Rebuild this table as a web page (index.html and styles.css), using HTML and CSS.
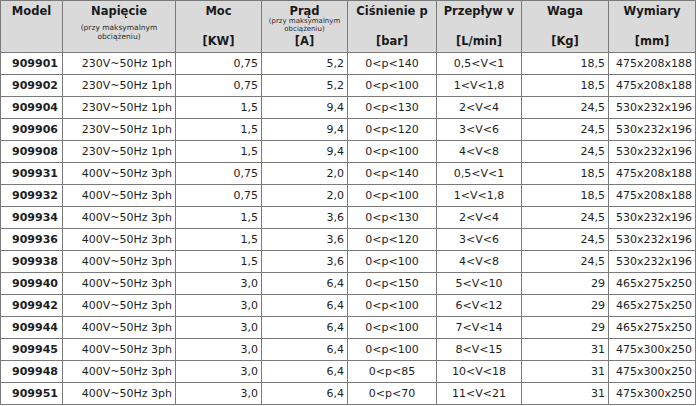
FILE: index.html
```html
<!DOCTYPE html>
<html lang="pl">
<head>
<meta charset="utf-8">
<title>Tabela</title>
<link rel="stylesheet" href="styles.css">
</head>
<body>
<table class="spec">
  <colgroup>
    <col class="c1"><col class="c2"><col class="c3"><col class="c4"><col class="c5"><col class="c6"><col class="c7"><col class="c8">
  </colgroup>
  <thead>
    <tr>
      <th><div class="hcell"><span class="title">Model</span></div></th>
      <th><div class="hcell"><span class="title">Napięcie</span><span class="note note-wide">(przy maksymalnym<br>obciążeniu)</span></div></th>
      <th><div class="hcell"><span class="title">Moc</span><span class="unit">[KW]</span></div></th>
      <th><div class="hcell"><span class="title">Prąd</span><span class="note">(przy maksymalnym<br>obciążeniu)</span><span class="unit unit-tight">[A]</span></div></th>
      <th><div class="hcell"><span class="title">Ciśnienie p</span><span class="unit">[bar]</span></div></th>
      <th><div class="hcell"><span class="title">Przepływ v</span><span class="unit">[L/min]</span></div></th>
      <th><div class="hcell"><span class="title">Waga</span><span class="unit">[Kg]</span></div></th>
      <th><div class="hcell"><span class="title">Wymiary</span><span class="unit">[mm]</span></div></th>
    </tr>
  </thead>
  <tbody>
    <tr><td class="model">909901</td><td class="r">230V~50Hz 1ph</td><td class="r">0,75</td><td class="r">5,2</td><td class="c">0&lt;p&lt;140</td><td class="c">0,5&lt;V&lt;1</td><td class="r">18,5</td><td class="dim">475x208x188</td></tr>
    <tr><td class="model">909902</td><td class="r">230V~50Hz 1ph</td><td class="r">0,75</td><td class="r">5,2</td><td class="c">0&lt;p&lt;100</td><td class="c">1&lt;V&lt;1,8</td><td class="r">18,5</td><td class="dim">475x208x188</td></tr>
    <tr><td class="model">909904</td><td class="r">230V~50Hz 1ph</td><td class="r">1,5</td><td class="r">9,4</td><td class="c">0&lt;p&lt;130</td><td class="c">2&lt;V&lt;4</td><td class="r">24,5</td><td class="dim">530x232x196</td></tr>
    <tr><td class="model">909906</td><td class="r">230V~50Hz 1ph</td><td class="r">1,5</td><td class="r">9,4</td><td class="c">0&lt;p&lt;120</td><td class="c">3&lt;V&lt;6</td><td class="r">24,5</td><td class="dim">530x232x196</td></tr>
    <tr><td class="model">909908</td><td class="r">230V~50Hz 1ph</td><td class="r">1,5</td><td class="r">9,4</td><td class="c">0&lt;p&lt;100</td><td class="c">4&lt;V&lt;8</td><td class="r">24,5</td><td class="dim">530x232x196</td></tr>
    <tr><td class="model">909931</td><td class="r">400V~50Hz 3ph</td><td class="r">0,75</td><td class="r">2,0</td><td class="c">0&lt;p&lt;140</td><td class="c">0,5&lt;V&lt;1</td><td class="r">18,5</td><td class="dim">475x208x188</td></tr>
    <tr><td class="model">909932</td><td class="r">400V~50Hz 3ph</td><td class="r">0,75</td><td class="r">2,0</td><td class="c">0&lt;p&lt;100</td><td class="c">1&lt;V&lt;1,8</td><td class="r">18,5</td><td class="dim">475x208x188</td></tr>
    <tr><td class="model">909934</td><td class="r">400V~50Hz 3ph</td><td class="r">1,5</td><td class="r">3,6</td><td class="c">0&lt;p&lt;130</td><td class="c">2&lt;V&lt;4</td><td class="r">24,5</td><td class="dim">530x232x196</td></tr>
    <tr><td class="model">909936</td><td class="r">400V~50Hz 3ph</td><td class="r">1,5</td><td class="r">3,6</td><td class="c">0&lt;p&lt;120</td><td class="c">3&lt;V&lt;6</td><td class="r">24,5</td><td class="dim">530x232x196</td></tr>
    <tr><td class="model">909938</td><td class="r">400V~50Hz 3ph</td><td class="r">1,5</td><td class="r">3,6</td><td class="c">0&lt;p&lt;100</td><td class="c">4&lt;V&lt;8</td><td class="r">24,5</td><td class="dim">530x232x196</td></tr>
    <tr><td class="model">909940</td><td class="r">400V~50Hz 3ph</td><td class="r">3,0</td><td class="r">6,4</td><td class="c">0&lt;p&lt;150</td><td class="c">5&lt;V&lt;10</td><td class="r">29</td><td class="dim">465x275x250</td></tr>
    <tr><td class="model">909942</td><td class="r">400V~50Hz 3ph</td><td class="r">3,0</td><td class="r">6,4</td><td class="c">0&lt;p&lt;100</td><td class="c">6&lt;V&lt;12</td><td class="r">29</td><td class="dim">465x275x250</td></tr>
    <tr><td class="model">909944</td><td class="r">400V~50Hz 3ph</td><td class="r">3,0</td><td class="r">6,4</td><td class="c">0&lt;p&lt;100</td><td class="c">7&lt;V&lt;14</td><td class="r">29</td><td class="dim">465x275x250</td></tr>
    <tr><td class="model">909945</td><td class="r">400V~50Hz 3ph</td><td class="r">3,0</td><td class="r">6,4</td><td class="c">0&lt;p&lt;100</td><td class="c">8&lt;V&lt;15</td><td class="r">31</td><td class="dim">475x300x250</td></tr>
    <tr><td class="model">909948</td><td class="r">400V~50Hz 3ph</td><td class="r">3,0</td><td class="r">6,4</td><td class="c">0&lt;p&lt;85</td><td class="c">10&lt;V&lt;18</td><td class="r">31</td><td class="dim">475x300x250</td></tr>
    <tr><td class="model">909951</td><td class="r">400V~50Hz 3ph</td><td class="r">3,0</td><td class="r">6,4</td><td class="c">0&lt;p&lt;70</td><td class="c">11&lt;V&lt;21</td><td class="r">31</td><td class="dim">475x300x250</td></tr>
  </tbody>
</table>
</body>
</html>
```
FILE: styles.css
```css
html, body {
  margin: 0;
  padding: 0;
  background: #ffffff;
}

.spec {
  border-collapse: collapse;
  table-layout: fixed;
  width: 695px;
  font-family: "DejaVu Sans", Verdana, sans-serif;
  font-size: 11px;
  color: #1e1e1e;
}

.c1 { width: 62px; }
.c2 { width: 113px; }
.c3 { width: 86px; }
.c4 { width: 86px; }
.c5 { width: 89px; }
.c6 { width: 85px; }
.c7 { width: 87px; }
.c8 { width: 87px; }

.spec th,
.spec td {
  border: 1px solid #7a7a7a;
  padding: 0;
}

.spec th {
  background: #dadada;
  vertical-align: top;
  font-weight: bold;
}

.hcell {
  height: 51px;
  display: flex;
  flex-direction: column;
  align-items: center;
  color: #1a1a1a;
}

.title {
  font-size: 11.5px;
  line-height: 14px;
  margin-top: 3px;
}

.note {
  font-size: 7px;
  line-height: 7.5px;
  font-weight: normal;
  color: #2a2a2a;
  text-align: center;
  margin-top: 0;
}

.note-wide {
  margin-top: 5px;
  line-height: 9px;
  font-size: 7.5px;
}

.unit {
  font-size: 11.5px;
  line-height: 14px;
  margin-top: auto;
  margin-bottom: 4px;
}

.unit-tight {
  margin-top: 1px;
}

.spec td {
  height: 21px;
  line-height: 14px;
  white-space: nowrap;
}

.model {
  font-weight: bold;
  font-size: 11px;
  text-align: right;
  padding-right: 4px !important;
}

.r {
  text-align: right;
  padding-right: 3px !important;
}

.c {
  text-align: center;
}

.dim {
  text-align: right;
  padding-right: 3px !important;
}
```
